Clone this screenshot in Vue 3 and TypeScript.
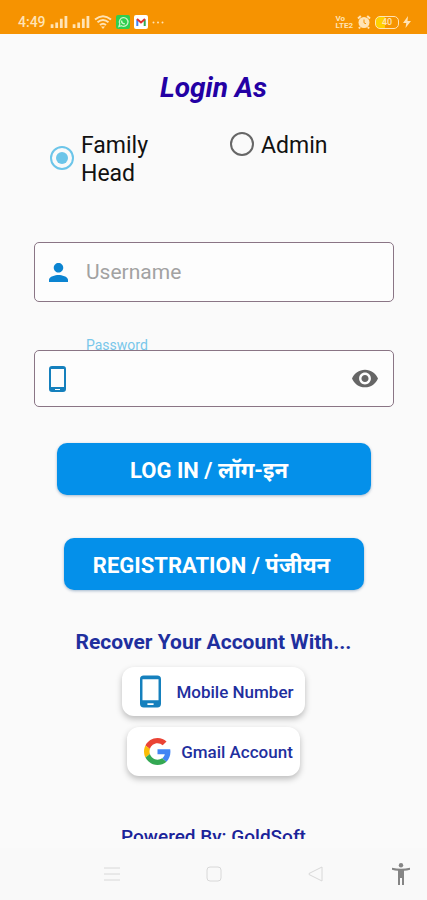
<script setup lang="ts">
import { ref } from 'vue'

type Role = 'family' | 'admin'

const role = ref<Role>('family')
const username = ref('')
const password = ref('')
const showPassword = ref(false)
</script>

<template>
  <div class="screen">
    <header class="status">
      <div class="status-group">
        <span class="clock">4:49</span>
        <svg v-for="n in 2" :key="n" class="signal" viewBox="0 0 18 13" aria-hidden="true">
          <path d="M0 9h3v4H0zM5 7h3v6H5zM10 3h3v10h-3zM15 0h3v13h-3z" />
        </svg>
        <svg class="wifi" viewBox="0 0 18 14" aria-hidden="true">
          <path d="M1 4.500Q9-2 17 4.500M3.500 7.300Q9 2.800 14.500 7.300M6 10Q9 7.500 12 10" />
          <path class="dot" d="M7 11.500h4L9 14z" />
        </svg>
        <svg class="app-icon" viewBox="0 0 14 14" aria-hidden="true">
          <rect width="14" height="14" rx="2" fill="#2fce4e" />
          <path d="M3 11.500l.8-2.600a4.300 4.300 0 1 1 1.700 1.800z" fill="none" stroke="#c8f5c8" stroke-width="1.300" />
          <path d="M5.500 5.500c0 2 1.500 3.300 3.300 3.300" fill="none" stroke="#c8f5c8" stroke-width="1.500" />
        </svg>
        <svg class="app-icon" viewBox="0 0 14 14" aria-hidden="true">
          <rect width="14" height="14" rx="2" fill="#fff" />
          <path d="M3.300 11V4.500" stroke="#4285f4" stroke-width="2" />
          <path d="M10.700 11V4.500" stroke="#34a853" stroke-width="2" />
          <path d="M3 4l4 3.400L11 4" fill="none" stroke="#e02f2f" stroke-width="2" />
        </svg>
        <svg class="more" viewBox="0 0 12 3" aria-hidden="true">
          <circle cx="1.500" cy="1.500" r="1" /><circle cx="6" cy="1.500" r="1" /><circle cx="10.500" cy="1.500" r="1" />
        </svg>
      </div>
      <div class="status-group">
        <span class="volte"><span>Vo</span><span>LTE2</span></span>
        <svg class="alarm" viewBox="0 0 14 14" aria-hidden="true">
          <circle cx="7" cy="7.500" r="5.500" />
          <path class="ears" d="M1 3.500L3.800 1M13 3.500L10.200 1M3 12l-1 1.500M11 12l1 1.500" />
          <path class="hands" d="M7 4.500v3.300l2 1" />
        </svg>
        <span class="battery">40</span>
        <svg class="bolt" viewBox="0 0 8 12" aria-hidden="true"><path d="M5 0L0 7h3.300L2.500 12 8 5H4.500z" /></svg>
      </div>
    </header>

    <main class="content">
      <h1 class="title">Login As</h1>

      <div class="roles" role="radiogroup" aria-label="Login As">
        <label class="role">
          <input v-model="role" type="radio" name="role" value="family" />
          <span>Family Head</span>
        </label>
        <label class="role">
          <input v-model="role" type="radio" name="role" value="admin" />
          <span>Admin</span>
        </label>
      </div>

      <form class="form" @submit.prevent>
        <div class="field user-field">
          <svg class="person" viewBox="4 4 16 16" aria-hidden="true">
            <path d="M12 12c2.210 0 4-1.790 4-4s-1.790-4-4-4-4 1.790-4 4 1.790 4 4 4zm0 2c-2.670 0-8 1.340-8 4v2h16v-2c0-2.660-5.330-4-8-4z" />
          </svg>
          <input v-model="username" type="text" placeholder="Username" aria-label="Username" />
        </div>

        <label class="float-label" for="password">Password</label>
        <div class="field password-field">
          <svg class="phone" viewBox="0 0 17 26" aria-hidden="true">
            <path fill-rule="evenodd" d="M3 0h11a3 3 0 0 1 3 3v20a3 3 0 0 1-3 3H3a3 3 0 0 1-3-3V3a3 3 0 0 1 3-3zM2 3v18h13V3zM6 23v1h5v-1z" />
          </svg>
          <input id="password" v-model="password" :type="showPassword ? 'text' : 'password'" />
          <button class="eye" type="button" aria-label="Show password" @click="showPassword = !showPassword">
            <svg viewBox="1 4 22 16" aria-hidden="true">
              <path d="M12 4.500C7 4.500 2.730 7.610 1 12c1.730 4.390 6 7.500 11 7.500s9.270-3.110 11-7.500c-1.730-4.390-6-7.500-11-7.500zM12 17c-2.760 0-5-2.240-5-5s2.240-5 5-5 5 2.240 5 5-2.240 5-5 5zm0-8c-1.660 0-3 1.340-3 3s1.340 3 3 3 3-1.340 3-3-1.340-3-3-3z" />
            </svg>
          </button>
        </div>

        <button class="primary login" type="submit">LOG IN / लॉग-इन</button>
        <button class="primary register" type="button">REGISTRATION / पंजीयन</button>
      </form>

      <h2 class="recover">Recover Your Account With...</h2>
      <div class="options">
        <button class="option mobile" type="button">
          <svg class="phone large" viewBox="0 0 17 26" aria-hidden="true">
            <path fill-rule="evenodd" d="M3 0h11a3 3 0 0 1 3 3v20a3 3 0 0 1-3 3H3a3 3 0 0 1-3-3V3a3 3 0 0 1 3-3zM2 3v17h13V3zM6 22.500v1.500h5v-1.500z" />
          </svg>
          Mobile Number
        </button>
        <button class="option gmail" type="button">
          <svg class="google" viewBox="0 0 48 48" aria-hidden="true">
            <path fill="#ea4335" d="M24 9.500c3.540 0 6.710 1.220 9.210 3.600l6.850-6.850C35.900 2.380 30.470 0 24 0 14.620 0 6.510 5.380 2.560 13.220l7.980 6.190C12.430 13.720 17.740 9.500 24 9.500z" />
            <path fill="#4285f4" d="M46.980 24.550c0-1.570-.15-3.090-.38-4.550H24v9.020h12.940c-.58 2.960-2.260 5.480-4.780 7.180l7.730 6c4.510-4.180 7.090-10.360 7.090-17.650z" />
            <path fill="#fbbc05" d="M10.530 28.590c-.48-1.450-.76-2.990-.76-4.590s.27-3.140.76-4.590l-7.980-6.190C.92 16.460 0 20.120 0 24c0 3.880.92 7.540 2.560 10.780l7.970-6.190z" />
            <path fill="#34a853" d="M24 48c6.480 0 11.930-2.130 15.890-5.810l-7.730-6c-2.150 1.450-4.920 2.300-8.160 2.300-6.260 0-11.570-4.220-13.470-9.910l-7.980 6.190C6.510 42.620 14.620 48 24 48z" />
          </svg>
          Gmail Account
        </button>
      </div>

      <p class="powered">Powered By: GoldSoft</p>
    </main>

    <nav class="navbar" aria-label="System">
      <button type="button" aria-label="Recent apps">
        <svg width="16" height="14" viewBox="0 0 16 14"><path d="M0 1h16M0 7h16M0 13h16" /></svg>
      </button>
      <button type="button" aria-label="Home">
        <svg width="16" height="16" viewBox="0 0 16 16"><rect x="1" y="1" width="14" height="14" rx="3" /></svg>
      </button>
      <button type="button" aria-label="Back">
        <svg width="16" height="16" viewBox="0 0 16 16"><path d="M14 1v14L1 8.500v-1z" /></svg>
      </button>
      <button class="access" type="button" aria-label="Accessibility">
        <svg width="20" height="22" viewBox="0 0 20 22">
          <circle cx="10" cy="2.300" r="2.200" />
          <path d="M1 4.800q9 2 18 0v2q-3 .8-6 1V22h-2v-7H9v7H7V7.800q-3-.2-6-1z" />
        </svg>
      </button>
    </nav>
  </div>
</template>

<style>
body {
  margin: 0;
  background: #fafafa;
}
</style>

<style scoped>
.screen {
  display: flex;
  flex-direction: column;
  height: 100vh;
  background: #fafafa;
  font-family: Roboto, 'Noto Sans', 'Noto Sans Devanagari', sans-serif;
  color: #111;
}
.screen *,
.screen *::before {
  box-sizing: border-box;
}
button {
  font-family: inherit;
  border: 0;
  padding: 0;
  background: none;
}

.status {
  flex: none;
  display: flex;
  justify-content: space-between;
  height: 34px;
  padding: 12px 16px 0 18px;
  background: #f69301;
  color: #ffe3b5;
}
.status-group {
  display: flex;
  align-items: center;
  gap: 4px;
  height: 20px;
}
.clock {
  font-size: 14px;
  font-weight: 500;
}
.status svg {
  fill: #ffe3b5;
}
.signal {
  width: 18px;
  height: 12px;
}
.wifi {
  width: 18px;
  height: 14px;
}
.wifi path {
  fill: none;
  stroke: #ffe3b5;
  stroke-width: 2;
}
.wifi .dot {
  fill: #ffe3b5;
  stroke: none;
}
.app-icon {
  width: 14px;
  height: 14px;
}
.more {
  width: 12px;
  height: 3px;
}
.volte {
  display: flex;
  flex-direction: column;
  font-size: 8px;
  font-weight: 700;
  line-height: 7px;
}
.alarm {
  width: 14px;
  height: 14px;
}
.alarm .ears {
  stroke: #ffe3b5;
  stroke-width: 2;
}
.alarm .hands {
  fill: none;
  stroke: #f69301;
  stroke-width: 1;
}
.battery {
  width: 24px;
  height: 13px;
  border: 1px solid #ffe3b5;
  border-radius: 5px;
  background: linear-gradient(90deg, #ffd000 40%, transparent 40%);
  font-size: 9px;
  font-weight: 500;
  line-height: 11px;
  text-align: center;
}
.bolt {
  width: 8px;
  height: 12px;
}

.content {
  flex: 1;
  min-height: 0;
  margin-bottom: 9px;
  overflow: hidden;
}
.title {
  margin: 36px 0 0;
  font-size: 28px;
  font-style: italic;
  font-weight: 700;
  line-height: 36px;
  text-align: center;
  color: #2300a4;
}
.roles {
  display: grid;
  grid-template-columns: 1fr 1fr;
  align-items: start;
  gap: 64px;
  margin: 26px 81px 0 50px;
}
.role {
  display: flex;
  align-items: center;
  gap: 7px;
  font-size: 23px;
  line-height: 28px;
}
.role input {
  appearance: none;
  flex: none;
  display: grid;
  place-items: center;
  width: 24px;
  height: 24px;
  margin: 0 0 4px;
  border: 2px solid #666;
  border-radius: 50%;
}
.role input:checked {
  border-color: #6cc5e9;
}
.role input:checked::before {
  content: '';
  width: 12px;
  height: 12px;
  border-radius: 50%;
  background: #6cc5e9;
}

.form {
  display: flex;
  flex-direction: column;
  margin: 54px 33px 0 34px;
}
.field {
  display: flex;
  align-items: center;
  padding: 0 15px 0 14px;
  border: 1px solid #8a7585;
  border-radius: 5px;
  background: #fdfdfd;
}
.user-field {
  height: 60px;
}
.password-field {
  height: 57px;
}
.field input {
  flex: 1;
  min-width: 0;
  height: 40px;
  padding: 0;
  border: 0;
  outline: 0;
  background: transparent;
  font-family: inherit;
  font-size: 21px;
  color: #222;
}
.field input::placeholder {
  color: #a2a2a2;
}
.person {
  flex: none;
  width: 19px;
  height: 19px;
  margin-right: 18px;
  fill: #0b84d1;
}
.phone {
  flex: none;
  width: 17px;
  height: 26px;
  fill: #1580bd;
}
.password-field .phone {
  margin-right: 20px;
}
.eye {
  width: 26px;
  height: 19px;
}
.eye svg {
  display: block;
  width: 26px;
  height: 19px;
  fill: #666;
}
.float-label {
  height: 13px;
  margin: 35px 0 0 52px;
  overflow: hidden;
  font-size: 14px;
  line-height: 16px;
  color: #78c7ea;
}
.primary {
  height: 52px;
  border-radius: 10px;
  background: #0490ea;
  box-shadow: 0 1px 3px rgb(0 60 120 / 35%);
  font-size: 22px;
  font-weight: 700;
  color: #fff;
}
.login {
  margin: 36px 23px 0;
  padding-right: 10px;
}
.register {
  margin: 43px 30px 0;
  padding-right: 5px;
}

.recover {
  margin: 38px 0 0;
  font-size: 21px;
  font-weight: 700;
  line-height: 28px;
  text-align: center;
  color: #1f2f9e;
}
.options {
  display: flex;
  flex-direction: column;
  align-items: center;
  gap: 11px;
  margin-top: 11px;
}
.option {
  display: flex;
  align-items: center;
  height: 49px;
  border-radius: 12px;
  background: #fff;
  box-shadow: 0 3px 6px rgb(0 0 0 / 25%);
  font-size: 17px;
  font-weight: 500;
  color: #1f2f9e;
}
.mobile {
  gap: 15px;
  padding: 0 11px 0 18px;
}
.gmail {
  gap: 10px;
  padding: 0 7px 0 17px;
}
.phone.large {
  width: 21px;
  height: 33px;
}
.google {
  width: 27px;
  height: 27px;
}
.powered {
  margin: 49px 0 0;
  font-size: 19px;
  font-weight: 500;
  line-height: 24px;
  text-align: center;
  color: #1a2399;
}

.navbar {
  flex: none;
  display: grid;
  grid-template-columns: 102px 102px 102px 60px;
  justify-content: end;
  align-items: center;
  height: 52px;
  background: #f9f9f9;
}
.navbar button {
  display: grid;
  place-items: center;
}
.navbar svg {
  fill: none;
  stroke: #d8d8d8;
  stroke-width: 1;
}
.navbar .access {
  padding-left: 8px;
}
.navbar .access svg {
  fill: #858585;
  stroke: none;
}
</style>
